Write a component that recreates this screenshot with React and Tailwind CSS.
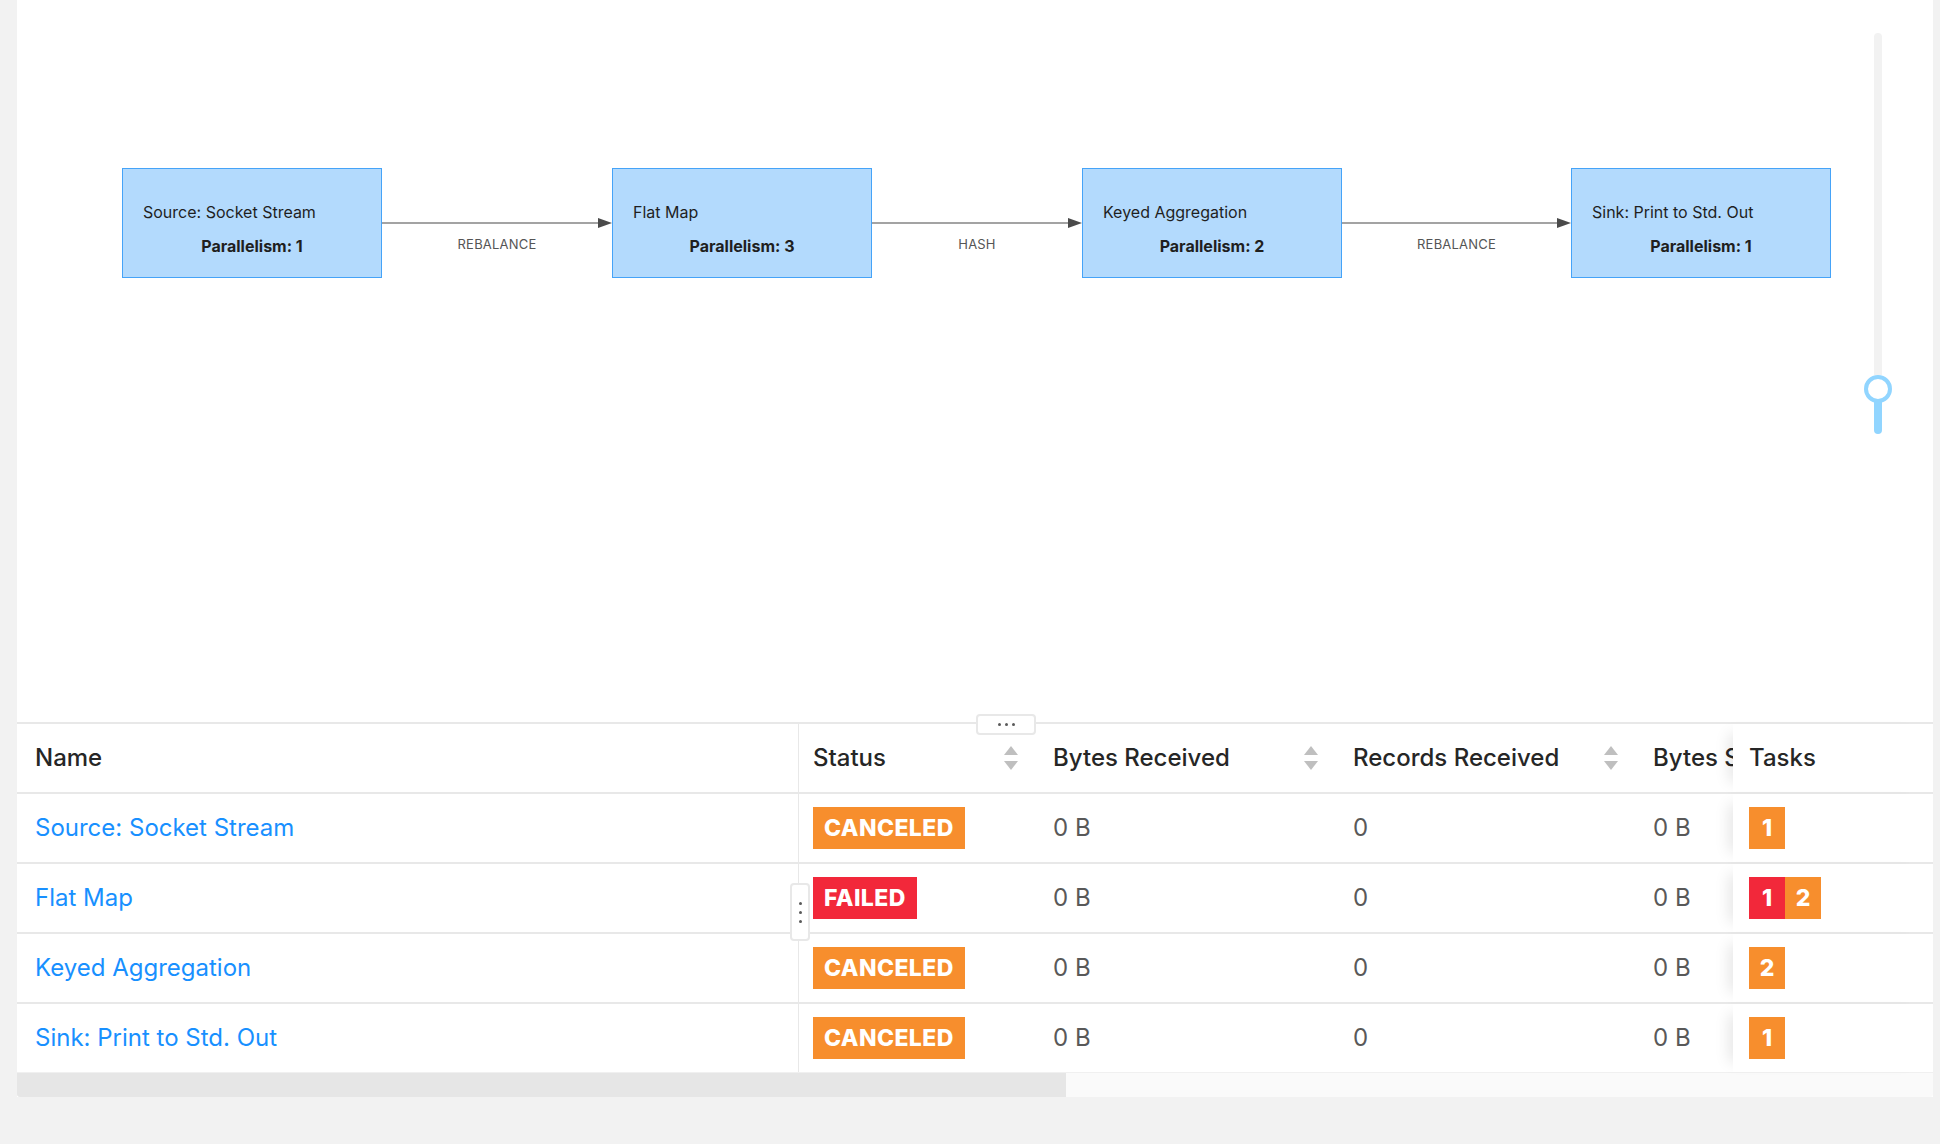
import React from "react";

function Node({ title, par }) {
  return (
    <div className="w-[260px] h-[110px] shrink-0 bg-[#b3dafd] border border-[#45a3f8] flex flex-col pt-[33px] text-[16px] leading-[20px] text-[#1f1f1f]">
      <div className="pl-[20px] whitespace-nowrap">{title}</div>
      <div className="mt-[14px] text-center font-bold">Parallelism: {par}</div>
    </div>
  );
}

function Edge({ label, className }) {
  return (
    <div className={`shrink-0 flex flex-col pt-[53px] ${className}`}>
      <div className="flex items-center h-[3px]">
        <div className="flex-1 h-[2px] bg-[#a3a3a3]" />
        <svg width="14" height="10" viewBox="0 0 14 10" className="shrink-0">
          <polygon points="0,0 14,5 0,10" fill="#4a4a4a" />
        </svg>
      </div>
      <div className="mt-[12px] text-center text-[13px] leading-[16px] text-[#555555] tracking-[0.2px]">
        {label}
      </div>
    </div>
  );
}

function SortIcon() {
  return (
    <svg width="16" height="26" viewBox="0 0 16 26" className="shrink-0">
      <polygon points="1,10 8,1 15,10" fill="#bfbfbf" />
      <polygon points="1,16 15,16 8,25" fill="#bfbfbf" />
    </svg>
  );
}

function StatusBadge({ s }) {
  if (s === "FAILED") {
    return (
      <span className="h-[42px] pl-[11px] pr-[11px] flex items-center text-white font-extrabold text-[23px] tracking-[0.4px] bg-[#f2283a]">
        FAILED
      </span>
    );
  }
  return (
    <span className="h-[42px] pl-[11px] pr-[11px] flex items-center text-white font-extrabold text-[23px] tracking-[0.4px] bg-[#f78e2d]">
      CANCELED
    </span>
  );
}

function TaskBadge({ n, red }) {
  return (
    <span
      className={
        red
          ? "w-[36px] h-[42px] flex items-center justify-center text-white font-extrabold text-[23px] bg-[#f2283a]"
          : "w-[36px] h-[42px] flex items-center justify-center text-white font-extrabold text-[23px] bg-[#f78e2d]"
      }
    >
      {n}
    </span>
  );
}

const rows = [
  { name: "Source: Socket Stream", status: "CANCELED", tasks: [{ n: 1, red: false }] },
  { name: "Flat Map", status: "FAILED", tasks: [{ n: 1, red: true }, { n: 2, red: false }] },
  { name: "Keyed Aggregation", status: "CANCELED", tasks: [{ n: 2, red: false }] },
  { name: "Sink: Print to Std. Out", status: "CANCELED", tasks: [{ n: 1, red: false }] },
];

export default function App() {
  return (
    <div className="w-[1940px] h-[1144px] overflow-hidden bg-[#f2f2f2] pl-[17px] pr-[7px] font-['Inter',sans-serif]">
      {/* Graph panel */}
      <div className="relative h-[722px] bg-white pl-[105px] pt-[168px]">
        <div className="flex">
          <Node title="Source: Socket Stream" par={1} />
          <Edge label="REBALANCE" className="w-[230px]" />
          <Node title="Flat Map" par={3} />
          <Edge label="HASH" className="w-[210px]" />
          <Node title="Keyed Aggregation" par={2} />
          <Edge label="REBALANCE" className="w-[229px]" />
          <Node title="Sink: Print to Std. Out" par={1} />
        </div>

        {/* zoom slider */}
        <div className="absolute left-[1847px] top-[33px] w-[28px] flex flex-col items-center">
          <div className="w-[8px] h-[342px] bg-[#f2f2f2] rounded-t-full" />
          <div className="w-[28px] h-[28px] rounded-full border-[4px] border-[#91d5ff] bg-white" />
          <div className="w-[8px] h-[32px] bg-[#91d5ff] rounded-b-full -mt-[1px]" />
        </div>
      </div>

      {/* Table */}
      <div className="relative bg-white border-t-2 border-[#e8e8e8]">
        {/* horizontal drag handle */}
        <div className="absolute left-[959px] -top-[10px] w-[60px] h-[21px] bg-white border-2 border-[#e8e8e8] rounded-[4px] flex items-center justify-center gap-[4px] z-20">
          <span className="w-[3px] h-[3px] rounded-full bg-[#5a5a5a]" />
          <span className="w-[3px] h-[3px] rounded-full bg-[#5a5a5a]" />
          <span className="w-[3px] h-[3px] rounded-full bg-[#5a5a5a]" />
        </div>
        {/* vertical drag handle */}
        <div className="absolute left-[773px] top-[159px] w-[20px] h-[58px] bg-white border-2 border-[#e8e8e8] rounded-[4px] flex flex-col items-center justify-center gap-[6px] z-20">
          <span className="w-[3px] h-[3px] rounded-full bg-[#5a5a5a]" />
          <span className="w-[3px] h-[3px] rounded-full bg-[#5a5a5a]" />
          <span className="w-[3px] h-[3px] rounded-full bg-[#5a5a5a]" />
        </div>

        {/* header */}
        <div className="flex h-[70px] border-b-2 border-[#e8e8e8] text-[24px] font-medium text-[#262626]">
          <div className="w-[782px] border-r border-[#e8e8e8] pl-[18px] flex items-center">Name</div>
          <div className="w-[240px] pl-[14px] pr-[20px] flex items-center justify-between">
            <span>Status</span>
            <SortIcon />
          </div>
          <div className="w-[300px] pl-[14px] pr-[20px] flex items-center justify-between">
            <span>Bytes Received</span>
            <SortIcon />
          </div>
          <div className="w-[300px] pl-[14px] pr-[20px] flex items-center justify-between">
            <span>Records Received</span>
            <SortIcon />
          </div>
          <div className="w-[94px] pl-[14px] flex items-center overflow-hidden whitespace-nowrap">
            Bytes Sent
          </div>
          <div className="relative w-[199px] pl-[16px] flex items-center bg-white shadow-[-14px_0_14px_-10px_rgba(0,0,0,0.10)]">
            Tasks
          </div>
        </div>

        {rows.map((r, i) => (
          <div
            key={r.name}
            className={
              i < rows.length - 1
                ? "flex h-[70px] border-b-2 border-[#e8e8e8] text-[24px] text-[#595959]"
                : "flex h-[68px] text-[24px] text-[#595959]"
            }
          >
            <div className="w-[782px] border-r border-[#e8e8e8] pl-[18px] flex items-center text-[#1890ff]">
              {r.name}
            </div>
            <div className="w-[240px] pl-[14px] flex items-center">
              <StatusBadge s={r.status} />
            </div>
            <div className="w-[300px] pl-[14px] flex items-center">0 B</div>
            <div className="w-[300px] pl-[14px] flex items-center">0</div>
            <div className="w-[94px] pl-[14px] flex items-center overflow-hidden whitespace-nowrap">0 B</div>
            <div className="relative w-[199px] pl-[16px] flex items-center bg-white shadow-[-14px_0_14px_-10px_rgba(0,0,0,0.10)]">
              {r.tasks.map((t, k) => (
                <TaskBadge key={k} n={t.n} red={t.red} />
              ))}
            </div>
          </div>
        ))}

        {/* horizontal scrollbar */}
        <div className="h-[25px] bg-[#fafafa] border-t border-[#f0f0f0] rounded-b-[3px] overflow-hidden">
          <div className="w-[1049px] h-full bg-[#e6e6e6]" />
        </div>
      </div>
    </div>
  );
}
